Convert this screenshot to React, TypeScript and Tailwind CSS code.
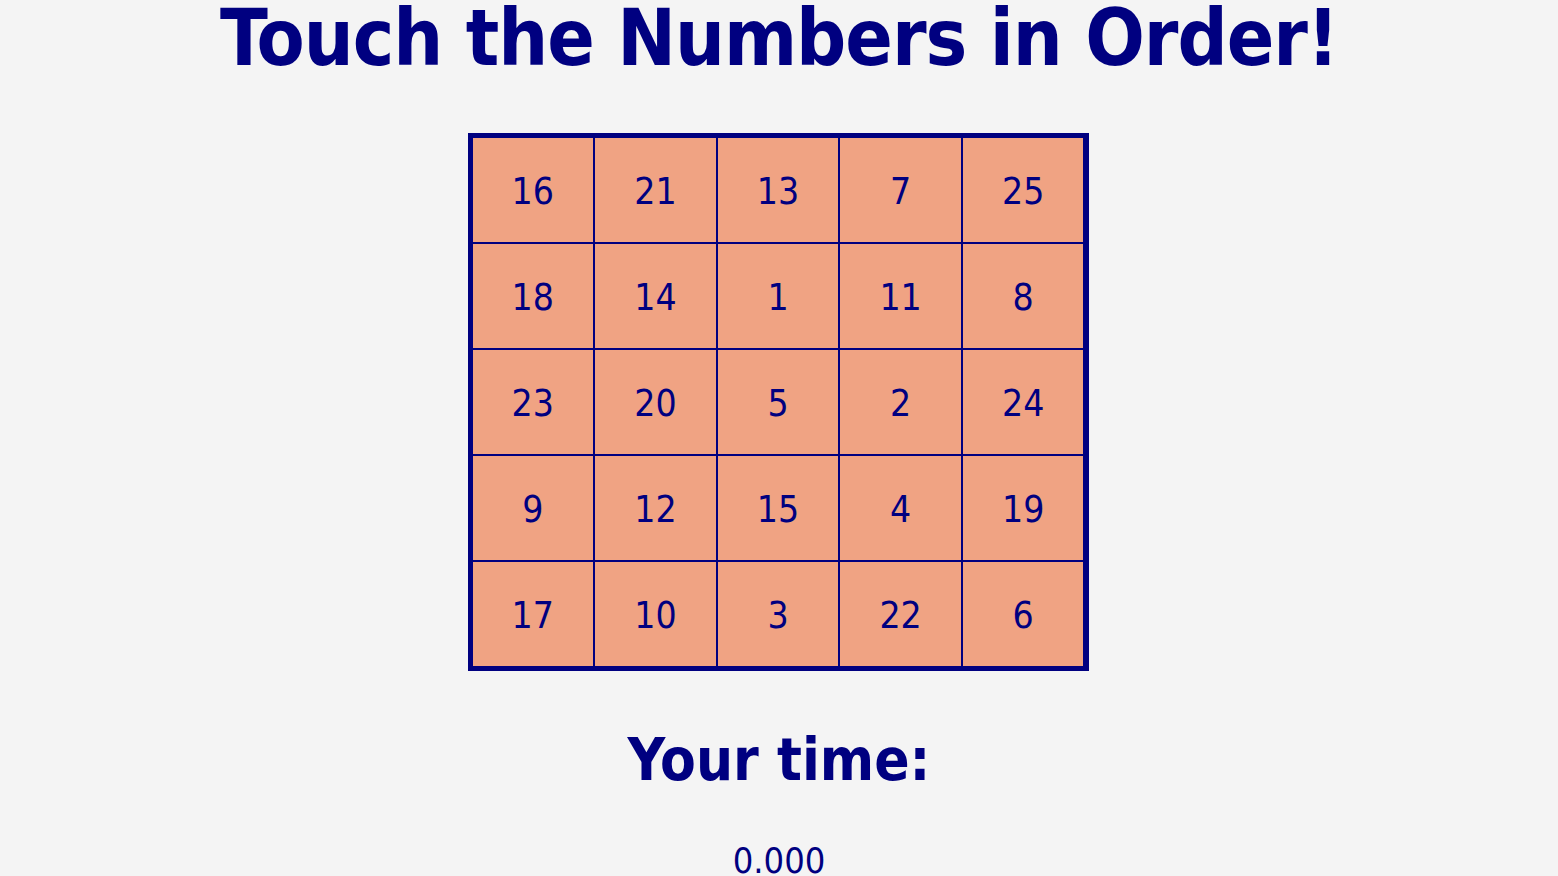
const grid = [
  [16, 21, 13, 7, 25],
  [18, 14, 1, 11, 8],
  [23, 20, 5, 2, 24],
  [9, 12, 15, 4, 19],
  [17, 10, 3, 22, 6],
]

export default function App() {
  return (
    <div className="min-h-[876px] w-full overflow-hidden bg-[#f4f4f4] text-[#000080] font-['DejaVu_Sans_Condensed','DejaVu_Sans',sans-serif]">
      <div className="flex flex-col items-center">
        <h1 className="mt-[-1px] text-[78px] font-bold leading-none tracking-[-1px] whitespace-nowrap">
          Touch the Numbers in Order!
        </h1>

        <div className="mt-[56px] ml-[-2px] border-[5px] border-[#000080] bg-[#000080]">
          <div className="grid w-[611px] grid-cols-5 gap-[2px]">
            {grid.flat().map((n) => (
              <div
                key={n}
                className="flex h-[104px] items-center justify-center pt-[3px] bg-[#f0a383] text-[37px]"
              >
                {n}
              </div>
            ))}
          </div>
        </div>

        <h2 className="mt-[60px] text-[58px] font-bold leading-none">Your time:</h2>
        <p className="mt-[54px] text-[36px] leading-none">0.000</p>
      </div>
    </div>
  )
}
